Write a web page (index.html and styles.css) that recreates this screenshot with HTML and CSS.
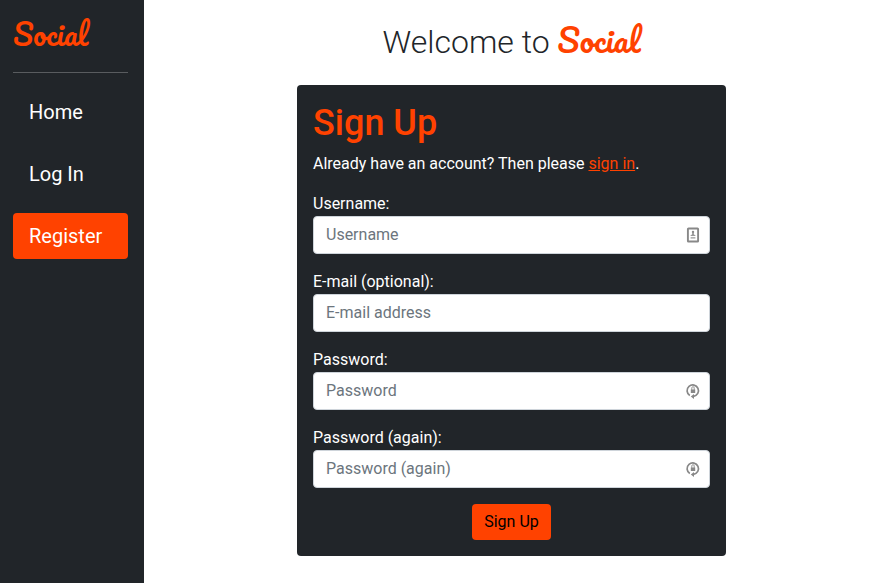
FILE: index.html
```html
<!DOCTYPE html>
<html lang="en">
<head>
<meta charset="utf-8">
<title>Social</title>
<link rel="stylesheet" href="styles.css">
</head>
<body>
<aside class="sidebar">
<div class="brand">Social</div>
<hr>
<nav><a>Home</a><a>Log In</a><a class="active">Register</a></nav>
</aside>
<main>
<h1>Welcome to <span class="script">Social</span></h1>
<form class="card">
<h2>Sign Up</h2>
<p>Already have an account? Then please <a>sign in</a>.</p>
<label>Username:</label>
<div class="field"><input placeholder="Username"><svg class="icon" viewBox="0 0 16 16"><rect x="2.900" y="1.500" width="10.200" height="13" rx=".6" fill="none" stroke="#888" stroke-width="1.900"/><circle cx="8" cy="5" r="1.200" fill="#888"/><path d="M7.300 5.500h1.400l.3 2 1.400.8V9H5.600v-.7L7 7.500zM5.600 10.300h4.800v1.200H5.600z" fill="#999"/></svg></div>
<label>E-mail (optional):</label>
<div class="field"><input placeholder="E-mail address"></div>
<label>Password:</label>
<div class="field"><input placeholder="Password"><svg class="icon" viewBox="0 0 16 16"><path d="M4.800 12.500A5.700 5.700 0 1 1 8.500 13.300" fill="none" stroke="#888" stroke-width="1.700"/><path d="M9 11v5L5.800 13.400z" fill="#888"/><path d="M6.800 7V4.900a1.200 1.200 0 0 1 2.400 0V7" fill="none" stroke="#999"/><path d="M5.800 6.500h4.400v3.500H5.800z" fill="#888"/></svg></div>
<label>Password (again):</label>
<div class="field"><input placeholder="Password (again)"><svg class="icon" viewBox="0 0 16 16"><path d="M4.800 12.500A5.700 5.700 0 1 1 8.500 13.300" fill="none" stroke="#888" stroke-width="1.700"/><path d="M9 11v5L5.800 13.400z" fill="#888"/><path d="M6.800 7V4.900a1.200 1.200 0 0 1 2.400 0V7" fill="none" stroke="#999"/><path d="M5.800 6.500h4.400v3.500H5.800z" fill="#888"/></svg></div>
<button type="button">Sign Up</button>
</form>
</main>
</body>
</html>
```
FILE: styles.css
```css
* { box-sizing: border-box; }
body { margin: 0; display: flex; height: 583px; overflow: hidden; font: 16px/24px Roboto, sans-serif; background: #fff; color: #212529; }
.sidebar { width: 144px; background: #212529; color: #fff; padding: 13px 16px 0 13px; }
.brand { height: 43px; font: 400 29px/42px "Pacifico", cursive; color: #ff4200; }
hr { margin: 16px 0; border: 0; border-top: 1px solid #595c5f; }
nav { display: flex; flex-direction: column; gap: 16px; font-size: 20px; line-height: 30px; }
nav a { padding: 8px 16px; border-radius: 4px; }
.active { background: #ff4200; }
main { flex: 1; display: flex; flex-direction: column; align-items: center; padding-left: 7px; }
h1 { height: 39px; margin: 20px 0 26px; font-weight: 300; font-size: 32px; line-height: 40px; white-space: nowrap; }
.script { font: 400 32px/38px "Pacifico", cursive; color: #ff4200; }
.card { width: 429px; height: 471px; padding: 16px; background: #212529; color: #fff; border-radius: 4px; }
h2 { height: 43px; margin: 0 0 8px; font-weight: 500; font-size: 36px; line-height: 45px; color: #ff4200; }
p { margin: 0 0 16px; }
p a { color: #ff4200; text-decoration: underline; }
label { display: block; }
.field { position: relative; margin-bottom: 16px; }
input { display: block; width: 100%; height: 38px; padding: 5px 12px 7px; border: 1px solid #ced4da; border-radius: 4px; font: inherit; }
input::placeholder { color: #6c757d; opacity: 1; }
.icon { position: absolute; right: 9px; top: 11px; width: 16px; height: 16px; }
button { display: block; margin: 0 auto; padding: 6px 12px; height: 36px; border: 0; border-radius: 4px; font: inherit; background: #ff4200; color: #000; }
```
